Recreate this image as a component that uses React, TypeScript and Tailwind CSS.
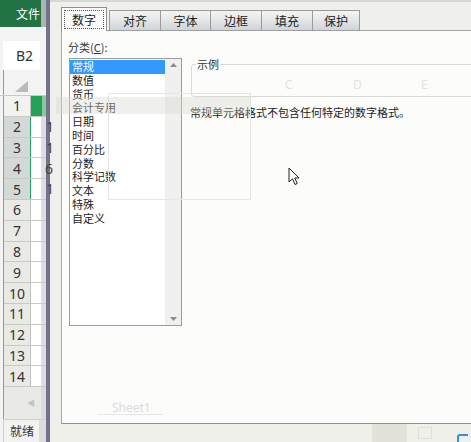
import React from 'react';

const items = ['常规', '数值', '货币', '会计专用', '日期', '时间', '百分比', '分数', '科学记数', '文本', '特殊', '自定义'];
const tabs = [
  { t: '对齐', w: 'w-[51px]' },
  { t: '字体', w: 'w-[50px]' },
  { t: '边框', w: 'w-[51px]' },
  { t: '填充', w: 'w-[51px]' },
  { t: '保护', w: 'w-[47px]' },
];

function RowHeader({ n }: { n: number }) {
  const sel = n >= 2 && n <= 5;
  const first = n === 1;
  return (
    <div className="h-[20.8px] flex border-b border-[#c9c9c5]">
      <div
        className={
          'w-[27px] flex items-center justify-center text-[14px] text-[#333] border-r ' +
          (sel ? 'bg-[#d3d9d6] border-[#21a366]' : first ? 'bg-[#f2f2f0] border-[#c0c0c0]' : 'bg-[#e9e9e5] border-[#c0c0c0]')
        }
      >
        {n}
      </div>
      <div className={'w-[11px] ' + (first ? 'bg-[#22a157]' : 'bg-white border-r border-[#e0e0e0]')} />
      <div className={'flex-1 ' + (first ? 'bg-[#8cc7a2]' : 'bg-[#dcdee4]')} />
    </div>
  );
}

export default function App() {
  return (
    <div className="relative w-[471px] h-[442px] overflow-hidden flex bg-white font-['Noto_Sans_CJK_SC','Noto_Sans',sans-serif]">
      {/* Excel left column */}
      <div className="w-[46px] h-full flex flex-col bg-[#f3f3f3]">
        <div className="h-[27px] flex shrink-0">
          <div className="w-[41px] bg-[#217346] flex items-center justify-end pr-[1px] text-white text-[12px]">文件</div>
          <div className="flex-1 bg-[#a7b8ae]" />
        </div>
        <div className="h-[14px] shrink-0" />
        <div className="h-[29px] shrink-0 pl-[3px] flex">
          <div className="w-[37px] h-full bg-white flex items-center pl-[13px] text-[14px] text-[#333] font-['Noto_Sans',sans-serif]">B2</div>
        </div>
        <div className="h-[26px] shrink-0 flex border-b border-[#c9c9c5]">
          <div className="ml-[3px] w-[27px] h-full relative border-l border-[#9a9a9a]">
            <svg className="absolute left-[11px] top-[11px]" width="13" height="11" viewBox="0 0 13 11">
              <polygon points="13,0 13,11 0,11" fill="#b9b9b9" />
            </svg>
          </div>
        </div>
        <div className="pl-[3px] flex flex-col font-['Noto_Sans',sans-serif]">
          <div className="border-l border-[#9a9a9a]">
            {Array.from({ length: 14 }, (_, i) => (
              <RowHeader key={i} n={i + 1} />
            ))}
          </div>
        </div>
        <div className="flex-1 flex ml-[3px] border-l border-[#9a9a9a] bg-[#e9e9e6]">
          <div className="w-[37px] flex items-center justify-end pr-[6px] text-[8px] text-[#c4c4c4]">◀</div>
          <div className="flex-1 bg-[#d9dbe0]" />
        </div>
        <div className="h-[23px] shrink-0 flex border-t border-[#d0d0d0] ml-[3px] border-l border-[#9a9a9a]">
          <div className="w-[35px] flex items-center pl-[6px] text-[12px] text-[#333] bg-[#f2f2f0]">就绪</div>
          <div className="flex-1 bg-[#dcdcdc]" />
        </div>
      </div>

      {/* dialog border stripe */}
      <div className="w-[4px] h-full bg-[#72728a]" />

      {/* dialog */}
      <div className="flex-1 h-full flex flex-col bg-[#efefed]">
        {/* tab strip */}
        <div className="h-[30px] shrink-0 flex items-end pl-[11px] border-t-2 border-[#d6d8d4]">
          <div className="relative z-10 w-[46px] h-[24px] -mb-px bg-[#fbfbf9] border border-b-0 border-[#8e8f8f] p-[2px]">
            <div className="w-full h-full border border-dotted border-[#555] flex items-center justify-center text-[12px] text-[#222]">
              数字
            </div>
          </div>
          <div className="ml-[2px] flex items-end border-l border-[#9a9a9a]">
            {tabs.map((tb) => (
              <div
                key={tb.t}
                className={
                  tb.w +
                  ' h-[20px] border-t border-r border-[#9a9a9a] bg-gradient-to-b from-[#f4f4f4] via-[#e4e6e6] to-[#cdd4da] flex items-center justify-center text-[12px] text-[#222]'
                }
              >
                {tb.t}
              </div>
            ))}
          </div>
        </div>

        {/* panel */}
        <div className="flex-1 flex pl-[11px]">
          <div className="relative flex-1 bg-[#fcfcfa] border-t border-l border-b border-t-[#a0a0a0] border-l-[#a8a8a8] border-b-[#8b9298] flex">
            {/* left column */}
            <div className="ml-[6px] w-[114px] flex flex-col">
              <div className="mt-[9px] h-[14px] leading-[14px] text-[11px] text-[#333]">
                分类(<span className="underline">C</span>):
              </div>
              <div className="mt-[4px] ml-[1px] h-[268px] border border-[#9c9c9c] flex bg-white">
                <div className="w-[95px] pt-[1px] flex flex-col">
                  {items.map((it, i) => (
                    <div
                      key={it}
                      className={
                        'h-[13.8px] leading-[13.8px] text-[11px] pl-[2px] ' +
                        (i === 0 ? 'bg-[#3399ff] text-white' : 'text-[#222]')
                      }
                    >
                      {it}
                    </div>
                  ))}
                </div>
                <div className="flex-1 bg-[#f0f0ee] flex flex-col justify-between items-center py-[4px]">
                  <svg width="7" height="4" viewBox="0 0 7 4">
                    <polygon points="0,4 7,4 3.5,0" fill="#8a8a8a" />
                  </svg>
                  <svg width="7" height="4" viewBox="0 0 7 4">
                    <polygon points="0,0 7,0 3.5,4" fill="#8a8a8a" />
                  </svg>
                </div>
              </div>
            </div>

            {/* right column */}
            <div className="ml-[8px] flex-1 flex flex-col">
              <div className="mt-[33px] ml-[1px] -mr-[10px] h-[33px] border border-[#d8d8d4] rounded-[3px] relative flex items-center">
                <span className="absolute -top-[7px] left-[4px] px-[1px] bg-[#fcfcfa] text-[11px] leading-[13px] text-[#333]">示例</span>
                <span className="absolute left-[93px] top-[14px] text-[12px] leading-[12px] text-[#e2e2e2] font-['Noto_Sans',sans-serif]">C</span>
                <span className="absolute left-[161px] top-[14px] text-[12px] leading-[12px] text-[#e2e2e2] font-['Noto_Sans',sans-serif]">D</span>
                <span className="absolute left-[229px] top-[14px] text-[12px] leading-[12px] text-[#e2e2e2] font-['Noto_Sans',sans-serif]">E</span>
              </div>
              <div className="mt-[8px] text-[11px] leading-[14px] text-[#222]">常规单元格格式不包含任何特定的数字格式。</div>
            </div>

            {/* ghost artifacts */}
            <div className="pointer-events-none absolute left-[46px] top-[62px] w-[143px] h-[107px] border border-[#e6e6e2]" />
            <div className="pointer-events-none absolute left-[-6px] top-[66px] w-[195px] h-[17px] bg-[#d8d8d0] opacity-40" />
            <div className="pointer-events-none absolute left-[50px] top-[368px] text-[12px] text-[#dadada] font-['Noto_Sans',sans-serif]">Sheet1</div>
            <div className="pointer-events-none absolute left-[36px] top-[383px] w-[65px] h-px bg-[#e6e6e6]" />
          </div>
        </div>

        {/* bottom band */}
        <div className="h-[18px] shrink-0 flex bg-[#f0f0ea]">
          <div className="ml-[322px] w-[35px] h-full bg-[#e2e2da]" />
          <div className="ml-[11px] mt-[3px] w-[14px] h-[12px] border border-[#e0e0da]" />
          <div className="ml-[25px] mt-[10px] w-[11px] h-[8px] border-l-2 border-t-2 border-[#3b8de0] rounded-tl-[3px]" />
        </div>
      </div>

      {/* ghost digits at sheet edge */}
      <div className="pointer-events-none absolute left-[46px] top-[117px] flex flex-col text-[14px] leading-[20.8px] text-[#444] font-['Noto_Sans',sans-serif]">
        <span>1</span>
        <span>1</span>
        <span className="-ml-[1px]">6</span>
        <span>1</span>
      </div>

      {/* mouse cursor */}
      <svg className="pointer-events-none absolute left-[288px] top-[167px]" width="14" height="20" viewBox="0 0 14 20">
        <path d="M1,1 L1,15 L4.5,11.8 L7,17.5 L9.2,16.5 L6.8,11 L11,11 Z" fill="white" stroke="#222" strokeWidth="1" strokeLinejoin="miter" />
      </svg>
    </div>
  );
}
